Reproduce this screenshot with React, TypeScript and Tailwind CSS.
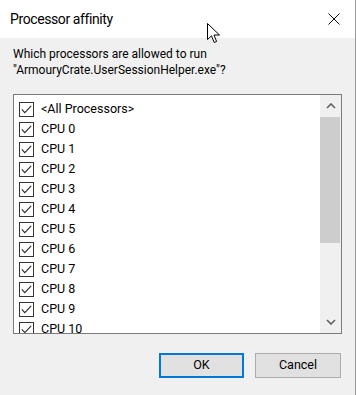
import React from 'react';

const cpus = ['<All Processors>', ...Array.from({ length: 11 }, (_, i) => `CPU ${i}`)];

function CheckBox() {
  return (
    <div className="w-[15px] h-[15px] border border-[#333333] bg-white flex items-center justify-center shrink-0">
      <svg width="11" height="9" viewBox="0 0 11 9" fill="none">
        <path d="M0.8 4.4 L3.8 7.6 L10.2 0.8" stroke="#2b2b2b" strokeWidth="1.1" />
      </svg>
    </div>
  );
}

function Chevron({ down }: { down?: boolean }) {
  return (
    <svg width="10" height="6" viewBox="0 0 10 6" fill="none">
      <path
        d={down ? 'M1 1 L5 5 L9 1' : 'M1 5 L5 1 L9 5'}
        stroke="#606060"
        strokeWidth="1.6"
      />
    </svg>
  );
}

export default function App() {
  return (
    <div
      className="relative w-[356px] h-[395px] bg-[#f0f0f0] border-r border-[#9a9a9a] flex flex-col text-black"
      style={{ fontFamily: 'Roboto, "Noto Sans", sans-serif' }}
    >
      <div className="h-[38px] bg-white flex items-center justify-between pl-[10px] pr-[15px]">
        <span className="text-[14px] tracking-[-0.4px] leading-none">Processor affinity</span>
        <svg width="12" height="12" viewBox="0 0 12 12" fill="none">
          <path d="M0.5 0.5 L11.5 11.5 M11.5 0.5 L0.5 11.5" stroke="#111" strokeWidth="1" />
        </svg>
      </div>

      <div className="px-[13px] pt-[8px] text-[12px] leading-[16px]">
        <p>Which processors are allowed to run</p>
        <p>"ArmouryCrate.UserSessionHelper.exe"?</p>
      </div>

      <div className="mx-[13px] mt-[16px] w-[329px] h-[240px] border border-[#7a7a7a] bg-white flex overflow-hidden">
        <div className="flex-1 pt-[4px] pl-[5px] overflow-hidden">
          {cpus.map((c) => (
            <div key={c} className="h-[20px] flex items-center gap-[7px] text-[12.5px] leading-[16px]">
              <CheckBox />
              <span>{c}</span>
            </div>
          ))}
        </div>
        <div className="w-[21px] bg-[#f0f0f0] flex flex-col">
          <div className="h-[22px] flex items-center justify-center">
            <Chevron />
          </div>
          <div className="h-[126px] bg-[#cdcdcd] mr-[1px]" />
          <div className="flex-1" />
          <div className="h-[22px] flex items-center justify-center">
            <Chevron down />
          </div>
        </div>
      </div>

      <div className="flex justify-end gap-[11px] mt-[19px] pr-[14px] text-[12.5px]">
        <button className="w-[85px] h-[25px] bg-[#e1e1e1] border-2 border-[#0078d7] flex items-center justify-center">
          OK
        </button>
        <button className="w-[86px] h-[25px] bg-[#e1e1e1] border border-[#adadad] flex items-center justify-center">
          Cancel
        </button>
      </div>

      <svg className="absolute left-[207px] top-[23px]" width="14" height="22" viewBox="0 0 14 22">
        <path
          d="M0.5 0.5 L0.5 16.5 L4.5 12.8 L7.2 19.5 L9.6 18.5 L7 12 L12.5 12 Z"
          fill="white"
          stroke="black"
          strokeWidth="1"
          strokeLinejoin="round"
        />
      </svg>
    </div>
  );
}
